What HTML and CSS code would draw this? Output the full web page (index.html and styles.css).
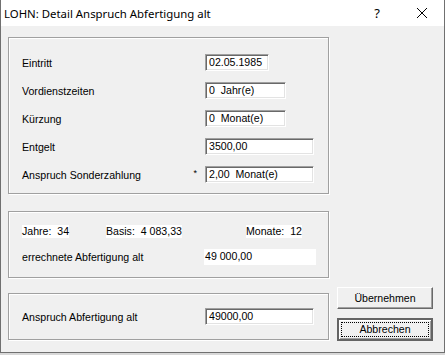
FILE: index.html
```html
<!DOCTYPE html>
<html lang="de">
<head>
  <meta charset="UTF-8">
  <title>LOHN: Detail Anspruch Abfertigung alt</title>
  <link rel="stylesheet" href="styles.css">
</head>
<body>

  <div class="window">
    <div class="titlebar">
      <span class="title">LOHN: Detail Anspruch Abfertigung alt</span>
      <span class="help">?</span>
      <svg class="close" width="12" height="12" viewBox="0 0 12 12">
        <path d="M1 1 L11 11 M11 1 L1 11" stroke="#000" stroke-width="1" fill="none"/>
      </svg>
    </div>

    <div class="content">
      <div class="left">
        <div class="group group-input">
          <div class="row">
            <span class="label">Eintritt</span>
            <span class="field w-date">02.05.1985</span>
          </div>
          <div class="row">
            <span class="label">Vordienstzeiten</span>
            <span class="field w-mid">0&nbsp;&nbsp;Jahr(e)</span>
          </div>
          <div class="row">
            <span class="label">Kürzung</span>
            <span class="field w-mid">0&nbsp;&nbsp;Monat(e)</span>
          </div>
          <div class="row">
            <span class="label">Entgelt</span>
            <span class="field w-wide">3500,00</span>
          </div>
          <div class="row">
            <span class="label">Anspruch Sonderzahlung <span class="star">*</span></span>
            <span class="field w-wide">2,00&nbsp;&nbsp;Monat(e)</span>
          </div>
        </div>

        <div class="group group-calc">
          <div class="stats">
            <div class="stat-cell jahre"><span class="stat">Jahre:&nbsp;&nbsp;34</span></div>
            <div class="stat-cell basis"><span class="stat">Basis:&nbsp;&nbsp;4 083,33</span></div>
            <div class="stat-cell"><span class="stat">Monate:&nbsp;&nbsp;12</span></div>
          </div>
          <div class="row calc-row">
            <span class="label">errechnete Abfertigung alt</span>
            <span class="static">49 000,00</span>
          </div>
        </div>

        <div class="group group-result">
          <div class="row">
            <span class="label">Anspruch Abfertigung alt</span>
            <span class="field w-wide">49000,00</span>
          </div>
        </div>
      </div>

      <div class="buttons">
        <button class="btn">Übernehmen</button>
        <button class="btn btn-default"><span class="focus">Abbrechen</span></button>
      </div>
    </div>
  </div>

</body>
</html>
```

FILE: styles.css
```css
body {
  margin: 0;
  background: #d8d8d8;
  font-family: "Liberation Sans", Arial, sans-serif;
  font-size: 10.6px;
  color: #000;
}
.window {
  width: 445px;
  height: 353px;
  box-sizing: border-box;
  background: #f0f0f0;
  border-left: 1px solid #707070;
  border-right: 1px solid #707070;
  border-bottom: 1px solid #707070;
}
.titlebar {
  height: 26px;
  background: #fff;
  display: flex;
  align-items: center;
  padding-left: 3px;
  font-family: "Noto Sans", sans-serif;
  font-size: 11.4px;
}
.title {
  flex: 1;
}
.help {
  margin-right: 36px;
  font-size: 13px;
}
.close {
  margin-right: 16px;
}
.content {
  display: flex;
  align-items: flex-end;
  padding: 11px 0 0 7px;
  gap: 8px;
}
.left {
  width: 321px;
  display: flex;
  flex-direction: column;
}
.group {
  border: 1px solid #a0a0a0;
  box-shadow: inset 1px 1px 0 #fff, 1px 1px 0 #fff;
  padding-left: 13px;
}
.group-input {
  padding-top: 16px;
  padding-bottom: 10px;
  display: flex;
  flex-direction: column;
  gap: 11px;
}
.group-calc {
  margin-top: 17px;
  padding-top: 13px;
  padding-bottom: 12px;
}
.group-result {
  margin-top: 15px;
  padding-top: 14px;
  padding-bottom: 14px;
}
.row {
  display: flex;
  align-items: center;
  height: 17px;
}
.label {
  width: 183px;
  flex-shrink: 0;
  display: flex;
  justify-content: space-between;
  align-items: flex-start;
}
.star {
  font-size: 9px;
  margin-right: 8px;
  line-height: 9px;
}
.field {
  height: 17px;
  box-sizing: border-box;
  background: #fff;
  border: 1px solid;
  border-color: #a0a0a0 #fff #fff #a0a0a0;
  box-shadow: inset 1px 1px 0 #696969, inset -1px -1px 0 #e3e3e3;
  padding: 1px 0 0 3px;
  white-space: nowrap;
}
.w-date {
  width: 64px;
}
.w-mid {
  width: 81px;
}
.w-wide {
  width: 109px;
}
.stats {
  display: flex;
  height: 13px;
  align-items: center;
}
.stat-cell.jahre {
  width: 84px;
}
.stat-cell.basis {
  width: 140px;
}
.stat {
  background: #fff;
  white-space: nowrap;
  line-height: 13px;
  display: inline-block;
}
.calc-row {
  margin-top: 11px;
  height: 16px;
}
.calc-row .label {
  width: 182px;
}
.static {
  width: 112px;
  height: 16px;
  background: #fff;
  line-height: 14px;
  padding-left: 1px;
  box-sizing: border-box;
}
.buttons {
  display: flex;
  flex-direction: column;
  gap: 9px;
  margin-bottom: -1px;
}
.btn {
  width: 96px;
  height: 22px;
  font-family: "Liberation Sans", Arial, sans-serif;
  font-size: 10.6px;
  color: #000;
  background: #f0f0f0;
  border: 1px solid;
  border-color: #fff #696969 #696969 #fff;
  box-shadow: inset -1px -1px 0 #a0a0a0;
  padding: 0;
}
.btn-default {
  height: 23px;
  border: 2px solid #646464;
  box-shadow: inset 1px 1px 0 #fff, inset -1px -1px 0 #a0a0a0;
  padding: 2px;
}
.focus {
  display: block;
  height: 100%;
  box-sizing: border-box;
  border: 1px dotted #000;
  line-height: 13px;
}
```
